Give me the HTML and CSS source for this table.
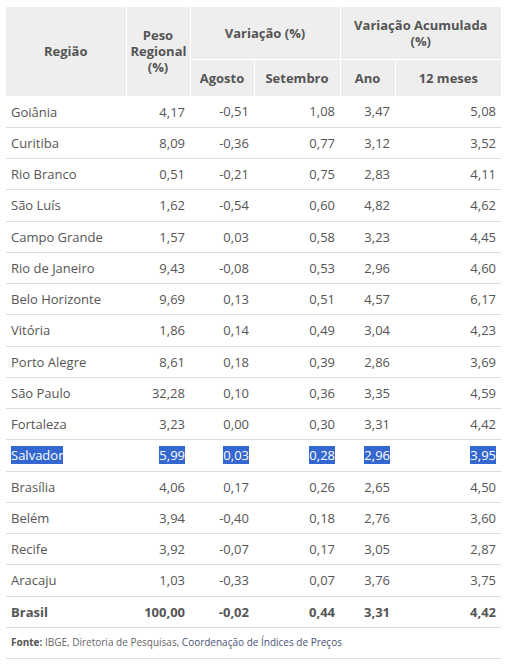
FILE: index.html
```html
<!DOCTYPE html>
<html lang="pt-BR">
<head>
<meta charset="utf-8">
<title>IPCA por região</title>
<link rel="stylesheet" href="styles.css">
</head>
<body>
<div class="wrap">
<table class="tbl">
  <colgroup>
    <col class="c-reg"><col class="c-peso"><col class="c-ago"><col class="c-set"><col class="c-ano"><col class="c-12m">
  </colgroup>
  <thead>
    <tr class="h1">
      <th rowspan="2">Região</th>
      <th rowspan="2">Peso<br>Regional<br>(%)</th>
      <th colspan="2">Variação (%)</th>
      <th colspan="2">Variação Acumulada<br>(%)</th>
    </tr>
    <tr class="h2">
      <th>Agosto</th>
      <th>Setembro</th>
      <th>Ano</th>
      <th>12 meses</th>
    </tr>
  </thead>
  <tbody>
    <tr><td>Goiânia</td><td>4,17</td><td>-0,51</td><td>1,08</td><td>3,47</td><td>5,08</td></tr>
    <tr><td>Curitiba</td><td>8,09</td><td>-0,36</td><td>0,77</td><td>3,12</td><td>3,52</td></tr>
    <tr><td>Rio Branco</td><td>0,51</td><td>-0,21</td><td>0,75</td><td>2,83</td><td>4,11</td></tr>
    <tr><td>São Luís</td><td>1,62</td><td>-0,54</td><td>0,60</td><td>4,82</td><td>4,62</td></tr>
    <tr><td>Campo Grande</td><td>1,57</td><td>0,03</td><td>0,58</td><td>3,23</td><td>4,45</td></tr>
    <tr><td>Rio de Janeiro</td><td>9,43</td><td>-0,08</td><td>0,53</td><td>2,96</td><td>4,60</td></tr>
    <tr><td>Belo Horizonte</td><td>9,69</td><td>0,13</td><td>0,51</td><td>4,57</td><td>6,17</td></tr>
    <tr><td>Vitória</td><td>1,86</td><td>0,14</td><td>0,49</td><td>3,04</td><td>4,23</td></tr>
    <tr><td>Porto Alegre</td><td>8,61</td><td>0,18</td><td>0,39</td><td>2,86</td><td>3,69</td></tr>
    <tr><td>São Paulo</td><td>32,28</td><td>0,10</td><td>0,36</td><td>3,35</td><td>4,59</td></tr>
    <tr><td>Fortaleza</td><td>3,23</td><td>0,00</td><td>0,30</td><td>3,31</td><td>4,42</td></tr>
    <tr class="sel"><td><span>Salvador</span></td><td><span>5,99</span></td><td><span>0,03</span></td><td><span>0,28</span></td><td><span>2,96</span></td><td><span>3,95</span></td></tr>
    <tr><td>Brasília</td><td>4,06</td><td>0,17</td><td>0,26</td><td>2,65</td><td>4,50</td></tr>
    <tr><td>Belém</td><td>3,94</td><td>-0,40</td><td>0,18</td><td>2,76</td><td>3,60</td></tr>
    <tr><td>Recife</td><td>3,92</td><td>-0,07</td><td>0,17</td><td>3,05</td><td>2,87</td></tr>
    <tr><td>Aracaju</td><td>1,03</td><td>-0,33</td><td>0,07</td><td>3,76</td><td>3,75</td></tr>
    <tr class="total"><td>Brasil</td><td>100,00</td><td>-0,02</td><td>0,44</td><td>3,31</td><td>4,42</td></tr>
  </tbody>
  <tfoot>
    <tr><td colspan="6"><b>Fonte:</b> IBGE, Diretoria de Pesquisas, <span class="lnk">Coordenação de Índices de Preços</span></td></tr>
  </tfoot>
</table>
</div>
</body>
</html>
```

FILE: styles.css
```css
html, body {
  margin: 0;
  padding: 0;
  background: #fff;
}
body {
  font-family: "Open Sans", "Liberation Sans", sans-serif;
  font-size: 13px;
  color: #555;
}
.wrap {
  padding: 7px 0 0 6px;
}
.tbl {
  width: 495px;
  border-collapse: collapse;
  table-layout: fixed;
}
.c-reg { width: 120px; }
.c-peso { width: 64px; }
.c-ago { width: 64px; }
.c-set { width: 86px; }
.c-ano { width: 55px; }
.c-12m { width: 106px; }

.tbl th {
  background: #eeeeee;
  font-weight: 700;
  color: #555;
  text-align: center;
  vertical-align: middle;
  line-height: 16px;
  border: 1px solid #fff;
  padding: 0 4px;
}
.tbl thead tr:first-child th { border-top: 0; }
.tbl thead th:first-child { border-left: 0; }
.tbl thead tr.h1 th:last-child { border-right: 0; }
.tbl thead tr.h2 th:last-child { border-right: 0; }
.tbl tr.h1 { height: 52px; }
.tbl tr.h2 { height: 37px; }
.tbl tr.h2 th { border-bottom: 0; }

.tbl tbody td {
  padding: 6px 5px 6px 5px;
  line-height: 18.25px;
  border-bottom: 1px solid #dcdcdc;
  text-align: right;
  white-space: nowrap;
}
.tbl tbody td:first-child { text-align: left; }

.tbl tr.sel span {
  background: #3467d0;
  color: #fff;
}
.tbl tr.total td { font-weight: 700; }

.tbl tfoot td {
  font-size: 10px;
  padding: 7px 5px 8px 5px;
  line-height: 15px;
  border-bottom: 1px solid #dcdcdc;
  color: #666;
}
.tbl tfoot b { color: #555; }
.lnk { color: #4a5275; }
```
